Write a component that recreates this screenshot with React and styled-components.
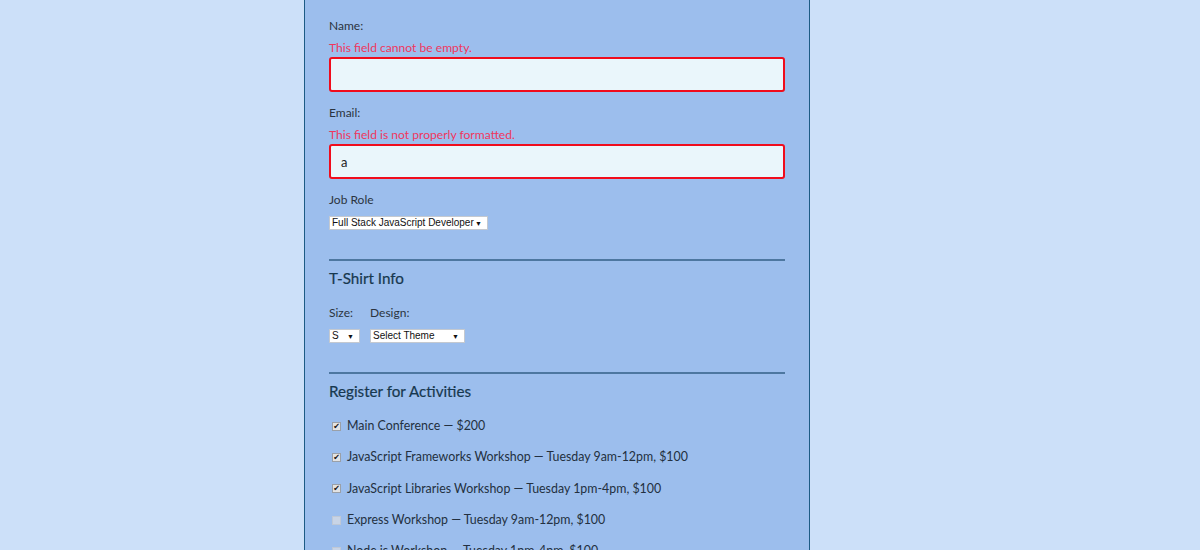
import React from "react";
import styled, { createGlobalStyle } from "styled-components";

const Global = createGlobalStyle`
  html, body { margin: 0; padding: 0; background: #cce0f9; }
  body { font-family: "Lato", "Open Sans", sans-serif; }
`;

const Page = styled.div`
  display: flex;
  justify-content: flex-start;
  min-height: 550px;
  padding-left: 304px;
`;

const Form = styled.form`
  width: 456px;
  background: #9cbeed;
  border-left: 1px solid #1d5b85;
  border-right: 1px solid #1d5b85;
  padding: 17px 24px 40px 24px;
  box-sizing: content-box;
  display: flex;
  flex-direction: column;
`;

const Label = styled.label`
  display: block;
  font-size: 12px;
  line-height: 18px;
  color: #2b3440;
`;

const Error = styled.div`
  font-size: 12.1px;
  line-height: 18px;
  color: #f0365d;
  margin-top: 4px;
`;

const TextInput = styled.input`
  box-sizing: border-box;
  width: 456px;
  height: 35px;
  margin: 0 0 12px 0;
  padding: 0 10px;
  background: #eaf6fb;
  border: 2px solid #f00c1c;
  border-radius: 3px;
  font-family: "Lato", sans-serif;
  font-size: 13px;
  color: #222;
  outline: none;
`;

const SelectBox = styled.div`
  position: relative;
  display: inline-flex;
  align-items: center;
  box-sizing: border-box;
  width: ${(p) => p.$w}px;
  height: 14px;
  background: #fff;
  border: 1px solid #c4c9d0;
`;

const NativeSelect = styled.select`
  appearance: none;
  -webkit-appearance: none;
  border: none;
  background: transparent;
  padding: 0 0 0 2px;
  margin: 0;
  width: 100%;
  height: 12px;
  font-family: "Liberation Sans", Arial, sans-serif;
  font-size: 10px;
  line-height: 12px;
  color: #111;
  outline: none;
`;

const Arrow = styled.span`
  position: absolute;
  right: 5px;
  top: 0;
  font-size: 7px;
  line-height: 12px;
  color: #111;
  pointer-events: none;
`;

const Divider = styled.hr`
  width: 456px;
  border: none;
  border-top: 2px solid #4d77a0;
  margin: ${(p) => p.$top}px 0 0 0;
`;

const Heading = styled.h2`
  margin: 7px 0 0 0;
  font-size: 15.2px;
  line-height: 20px;
  font-weight: 400;
  color: #17384f;
  -webkit-text-stroke: 0.2px #17384f;
`;

const Row = styled.div`
  display: flex;
  gap: ${(p) => p.$gap || 0}px;
  margin-top: ${(p) => p.$top || 0}px;
`;

const Col = styled.div`
  display: flex;
  flex-direction: column;
  gap: 7px;
`;

const Activities = styled.div`
  display: flex;
  flex-direction: column;
  gap: 13.35px;
  margin-top: 16px;
`;

const Activity = styled.label`
  display: flex;
  align-items: center;
  font-size: 12.4px;
  line-height: 18px;
  color: #233040;
  gap: 6px;
  padding-left: 3px;
`;

const Check = styled.span`
  box-sizing: border-box;
  width: 9px;
  height: 9px;
  border: 1px solid ${(p) => (p.$disabled ? "#bfc8d6" : "#9aa0a8")};
  background: ${(p) => (p.$disabled ? "#c8d4e6" : "#e3e3e3")};
  display: flex;
  align-items: center;
  justify-content: center;
  font-size: 8px;
  line-height: 9px;
  color: #111;
  font-family: "DejaVu Sans", sans-serif;
`;

function Select({ width, options }) {
  return (
    <SelectBox $w={width}>
      <NativeSelect>
        {options.map((o) => (
          <option key={o}>{o}</option>
        ))}
      </NativeSelect>
      <Arrow>▼</Arrow>
    </SelectBox>
  );
}

const activities = [
  { text: "Main Conference — $200", checked: true },
  { text: "JavaScript Frameworks Workshop — Tuesday 9am-12pm, $100", checked: true },
  { text: "JavaScript Libraries Workshop — Tuesday 1pm-4pm, $100", checked: true },
  { text: "Express Workshop — Tuesday 9am-12pm, $100", disabled: true },
  { text: "Node.js Workshop — Tuesday 1pm-4pm, $100", disabled: true },
  { text: "Build tools Workshop — Wednesday 9am-12pm, $100" },
  { text: "npm Workshop — Wednesday 1pm-4pm, $100" },
];

export default function App() {
  return (
    <>
      <Global />
      <Page>
        <Form onSubmit={(e) => e.preventDefault()}>
          <Label htmlFor="name">Name:</Label>
          <Error>This field cannot be empty.</Error>
          <TextInput id="name" defaultValue="" />
          <Label htmlFor="mail">Email:</Label>
          <Error>This field is not properly formatted.</Error>
          <TextInput id="mail" defaultValue="a" />
          <Col>
            <Label>Job Role</Label>
            <Select width={159} options={["Full Stack JavaScript Developer"]} />
          </Col>
          <Divider $top={29} />
          <Heading>T-Shirt Info</Heading>
          <Row $gap={10} $top={16}>
            <Col>
              <Label>Size:</Label>
              <Select width={31} options={["S"]} />
            </Col>
            <Col>
              <Label>Design:</Label>
              <Select width={95} options={["Select Theme"]} />
            </Col>
          </Row>
          <Divider $top={29} />
          <Heading>Register for Activities</Heading>
          <Activities>
            {activities.map((a) => (
              <Activity key={a.text}>
                <Check $disabled={a.disabled}>{a.checked ? "✔" : ""}</Check>
                {a.text}
              </Activity>
            ))}
          </Activities>
        </Form>
      </Page>
    </>
  );
}
